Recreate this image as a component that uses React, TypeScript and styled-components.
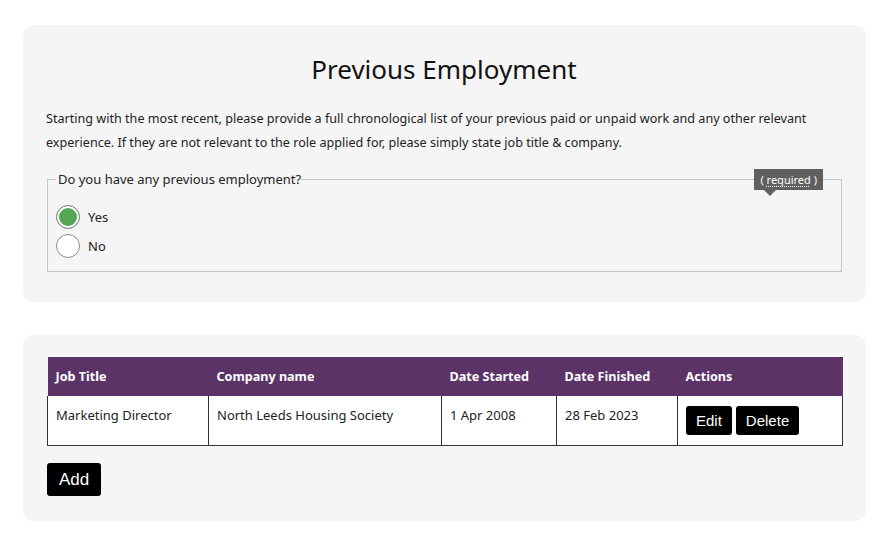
import React, { useState } from "react";
import styled, { createGlobalStyle } from "styled-components";

const GlobalStyle = createGlobalStyle`
  html, body {
    margin: 0;
    padding: 0;
    background: #ffffff;
  }
  body {
    font-family: "Noto Sans", "Open Sans", sans-serif;
    color: #222;
  }
`;

type Job = {
  title: string;
  company: string;
  started: string;
  finished: string;
};

const jobs: Job[] = [
  {
    title: "Marketing Director",
    company: "North Leeds Housing Society",
    started: "1 Apr 2008",
    finished: "28 Feb 2023",
  },
];

const columns = [
  { label: "Job Title", width: 161 },
  { label: "Company name", width: 233 },
  { label: "Date Started", width: 115 },
  { label: "Date Finished", width: 121 },
  { label: "Actions", width: 165 },
];

const Page = styled.main`
  padding: 25px 23px 26px 23px;
  display: flex;
  flex-direction: column;
  gap: 33px;
`;

const Card = styled.section<{ $pad: string }>`
  background: #f5f5f5;
  border-radius: 10px;
  padding: ${(p) => p.$pad};
`;

const Title = styled.h2`
  margin: 0 0 18px 0;
  text-align: center;
  font-weight: 400;
  font-size: 26px;
  line-height: 40px;
  color: #111;
`;

const Intro = styled.p`
  margin: 0 0 16px 0;
  font-size: 12.6px;
  line-height: 24px;
  color: #222;
`;

const Fieldset = styled.fieldset`
  position: relative;
  margin: 0 0 0 1px;
  padding: 18px 8px 13px 8px;
  border: 1px solid #c4c4c4;
  display: flex;
  flex-direction: column;
  gap: 5px;
`;

const Legend = styled.legend`
  padding: 0 0 0 2px;
  margin-left: 0;
  font-size: 13px;
  line-height: 16px;
  color: #222;
`;

const Required = styled.span`
  position: absolute;
  top: -18px;
  right: 18px;
  display: inline-block;
  height: 21px;
  background: #5f5f5f;
  color: #fff;
  font-size: 11px;
  line-height: 21px;
  padding: 0 6px;

  &::after {
    content: "";
    position: absolute;
    left: 10px;
    bottom: -6px;
    border-left: 6px solid transparent;
    border-right: 6px solid transparent;
    border-top: 6px solid #5f5f5f;
  }

  abbr {
    text-decoration: underline dotted;
    text-underline-offset: 2px;
  }
`;

const RadioRow = styled.label`
  display: flex;
  align-items: center;
  gap: 8px;
  font-size: 13px;
  color: #222;
  cursor: pointer;
`;

const RadioDot = styled.span<{ $checked: boolean }>`
  width: 22px;
  height: 22px;
  border-radius: 50%;
  border: 1px solid #8a8a8a;
  background: ${(p) => (p.$checked ? "#53a653" : "#fff")};
  box-shadow: ${(p) => (p.$checked ? "inset 0 0 0 2px #fff" : "none")};
  flex-shrink: 0;
`;

const HiddenInput = styled.input`
  position: absolute;
  opacity: 0;
  width: 0;
  height: 0;
`;

const Table = styled.table`
  width: 100%;
  border-collapse: collapse;
  table-layout: fixed;
  margin-bottom: 17px;
`;

const HeadCell = styled.th`
  background: #5c3366;
  color: #fff;
  text-align: left;
  font-size: 12.6px;
  font-weight: 700;
  padding: 0 8px;
  height: 39px;
`;

const Cell = styled.td`
  background: #fff;
  border: 1px solid #333;
  border-top: none;
  vertical-align: top;
  font-size: 13px;
  color: #222;
  padding: 10px 8px 0 8px;
  height: 39px;
`;

const Actions = styled.div`
  display: flex;
  gap: 4px;
`;

const Button = styled.button<{ $size?: "sm" | "lg" }>`
  background: #000;
  color: #fff;
  border: none;
  border-radius: 3px;
  font-family: "Liberation Sans", Arial, sans-serif;
  font-size: ${(p) => (p.$size === "lg" ? "17px" : "15px")};
  height: ${(p) => (p.$size === "lg" ? "33px" : "29px")};
  padding: 0 ${(p) => (p.$size === "lg" ? "12px" : "10px")};
  cursor: pointer;
`;

export default function App() {
  const [hasPrevious, setHasPrevious] = useState<"yes" | "no">("yes");

  return (
    <>
      <GlobalStyle />
      <Page>
        <Card $pad="24px 24px 30px 23px">
          <Title>Previous Employment</Title>
          <Intro>
            Starting with the most recent, please provide a full chronological list of your
            previous paid or unpaid work and any other relevant experience. If they are not
            relevant to the role applied for, please simply state job title &amp; company.
          </Intro>
          <Fieldset>
            <Legend>Do you have any previous employment?</Legend>
            <Required>
              ( <abbr title="required">required</abbr> )
            </Required>
            {(["yes", "no"] as const).map((v) => (
              <RadioRow key={v}>
                <HiddenInput
                  type="radio"
                  name="previous"
                  checked={hasPrevious === v}
                  onChange={() => setHasPrevious(v)}
                />
                <RadioDot $checked={hasPrevious === v} />
                {v === "yes" ? "Yes" : "No"}
              </RadioRow>
            ))}
          </Fieldset>
        </Card>

        <Card $pad="22px 24px 25px 24px">
          <Table>
            <colgroup>
              {columns.map((c) => (
                <col key={c.label} style={{ width: c.width }} />
              ))}
            </colgroup>
            <thead>
              <tr>
                {columns.map((c) => (
                  <HeadCell key={c.label}>{c.label}</HeadCell>
                ))}
              </tr>
            </thead>
            <tbody>
              {jobs.map((job) => (
                <tr key={job.title + job.started}>
                  <Cell>{job.title}</Cell>
                  <Cell>{job.company}</Cell>
                  <Cell>{job.started}</Cell>
                  <Cell>{job.finished}</Cell>
                  <Cell>
                    <Actions>
                      <Button>Edit</Button>
                      <Button>Delete</Button>
                    </Actions>
                  </Cell>
                </tr>
              ))}
            </tbody>
          </Table>
          <Button $size="lg">Add</Button>
        </Card>
      </Page>
    </>
  );
}
